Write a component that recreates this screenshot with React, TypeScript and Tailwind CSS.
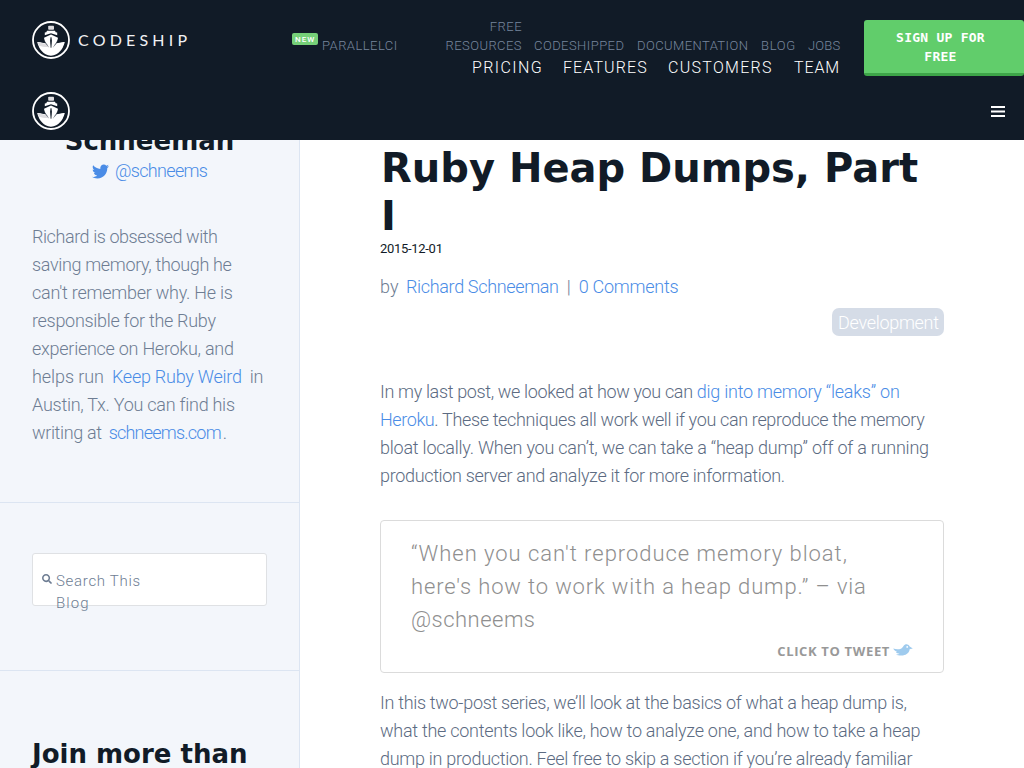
import { FaTwitter, FaSearch } from 'react-icons/fa';

function ShipMark() {
  return (
    <svg viewBox="0 0 38 38" className="block size-[38px] shrink-0" fill="#fff">
      <circle cx="19" cy="19" r="18" fill="none" stroke="#fff" strokeWidth="1.8" />
      <rect x="16.200" y="4.800" width="5.800" height="4" rx="0.8" fill="#dedde0" />
      <path d="M15 9.800h8l.7 1.400 1.500.4v2.600L19 12.300l-6.200 1.900v-2.600l1.500-.4z" />
      <path d="M19 13.400l7 3.300c-.3 2.200-1.100 3.900-2.200 5.600 3 .2 5-1.600 9-1.200-.6 2.400-1.200 3.600-2 5.300-1.400 2.700-3.800 5.200-6.500 6.900-3.500 1.900-7.300 1.900-10.700 0-2.700-1.700-5-4.200-6.400-6.900-.8-1.700-1.500-2.900-2-5.300 4-.4 6 1.400 9 1.200-1.100-1.700-1.900-3.400-2.200-5.600z" />
      <path d="M5.800 21.500c3-.4 4.800 1.200 8 1 .8 1.600 1.800 2.600 2.800 3.400-3.400.2-7-.4-9.300-1.200-.8-1-1.200-2-1.500-3.200z" fill="#dedde0" />
      <path d="M12.300 20.200l1.500 2.900 3.400 3.600-2.200-3.700z M25.700 20.200l-1.500 2.900-3.400 3.600 2.200-3.700z" fill="#5a626d" />
      <path d="M18.500 16.200h1l.4 3.400-.5 7.200h-.8l-.5-7.200z" fill="#111b27" />
    </svg>
  );
}

function TweetBird() {
  return (
    <svg viewBox="0 0 20 12" className="block h-[12px] w-[20px]">
      <path d="M.2 4.600c2.700.9 5.300 1 7.700.2C9 4.200 10 2.900 10.500 1.900 11.400.5 13 .1 14.300.4c1.300.3 2.100 1.100 2.400 2.200l3.100 2-3.200.7c-.2 3.300-2.800 5.600-6.600 6.100-2.600.4-5.400 0-7-.8 1.500.1 2.700-.2 3.600-.8C5 9.500 3.500 8.900 2.900 7.900l1.300-.1C2.400 7.300.8 6.200.2 4.600z" fill="#9fcbee" />
      <circle cx="14.200" cy="2.900" r=".9" fill="#fff" />
    </svg>
  );
}

const link = 'text-[#4a8ce6]';

export default function App() {
  return (
    <div className="flex h-[768px] w-[1024px] flex-col overflow-hidden bg-white font-['Roboto',sans-serif] font-light text-[#5c6b82]">
      <header className="h-[140px] shrink-0 bg-[#111b27]">
        <div className="flex h-[92px]">
          <div className="flex w-[292px] pl-8 pt-[21px]">
            <ShipMark />
            <span className="ml-[8px] mt-[7px] font-['Lato',sans-serif] text-[16px] font-normal leading-6 tracking-[4.200px] text-[#f1f1f3]">CODESHIP</span>
          </div>
          <nav className="w-[572px] pt-[17px]">
            <div className="flex items-end whitespace-nowrap text-[13px] leading-[19px] text-[#77869d]">
              <span className="mb-[10px] h-[12px] w-[26px] rounded-[2px] bg-[#76d078] pl-[3px] text-[8px] font-medium leading-[14px] tracking-[1px] text-white">NEW</span>
              <span className="w-[127px] pl-[4px] tracking-[0.45px]">PARALLELCI</span>
              <span className="w-[77px] text-right tracking-[0.450px]">FREE<br />RESOURCES</span>
              <span className="ml-[12px] w-[103px] tracking-[0.45px]">CODESHIPPED</span>
              <span className="w-[124px] tracking-[0.42px]">DOCUMENTATION</span>
              <span className="w-[47px] tracking-[0.7px]">BLOG</span>
              <span className="tracking-[0.2px]">JOBS</span>
            </div>
            <div className="mt-[2px] flex whitespace-nowrap pl-[180px] text-[16px] leading-[22px] text-white">
              <span className="w-[91px] tracking-[1.400px]">PRICING</span>
              <span className="w-[105px] tracking-[1.100px]">FEATURES</span>
              <span className="w-[126px] tracking-[1.300px]">CUSTOMERS</span>
              <span className="tracking-[0.900px]">TEAM</span>
            </div>
          </nav>
          <button className="mt-[20px] h-[56px] w-[160px] rounded-[3px] border-b-[3px] border-[#3da548] bg-[#61cd6b] pr-[7px] text-center font-['DejaVu_Sans_Mono',monospace] text-[13px] font-bold leading-[19px] tracking-[0.25px] text-white">
            SIGN UP FOR<br />FREE
          </button>
        </div>
        <div className="flex items-start justify-between pl-8 pr-[19px]">
          <ShipMark />
          <svg viewBox="0 0 14 11" className="mt-[14px] h-[11px] w-[14px]" fill="#fff">
            <path d="M0 0h14v2H0zM0 4.500h14v2H0zM0 9h14v2H0z" />
          </svg>
        </div>
      </header>

      <div className="flex h-[628px] overflow-hidden">
        <aside className="w-[300px] shrink-0 border-r border-[#dce5f2] bg-[#f3f6fb]">
          <section className="-mt-[14px] h-[377px] border-b border-[#dce5f2]">
            <h3 className="text-center font-['DejaVu_Sans',sans-serif] text-[26px] font-bold leading-[30px] text-[#111b27]">Schneeman</h3>
            <div className={`flex items-center pl-[92px] pt-px text-[18px] leading-[28px] ${link}`}>
              <FaTwitter className="size-[17px]" />
              <span className="ml-[6px] tracking-[-0.670px]">@schneems</span>
            </div>
            <p className="mt-[38px] whitespace-nowrap pl-8 text-[18px] leading-[28px] text-[#6e7d93]">
              <span className="tracking-[-0.430px]">Richard is obsessed with</span><br />
              <span className="tracking-[-0.340px]">saving memory, though he</span><br />
              <span className="tracking-[-0.240px]">can't remember why. He is</span><br />
              <span className="tracking-[-0.300px]">responsible for the Ruby</span><br />
              <span className="tracking-[-0.260px]">experience on Heroku, and</span><br />
              <span className="tracking-[-0.070px]">helps run</span>
              <a className={`ml-[8px] tracking-[-0.240px] ${link}`}>Keep Ruby Weird</a>
              <span className="ml-[8px] tracking-[-0.200px]">in</span><br />
              <span className="tracking-[-0.260px]">Austin, Tx. You can find his</span><br />
              <span className="tracking-[-0.360px]">writing at</span>
              <a className={`ml-[7px] tracking-[-0.780px] ${link}`}>schneems.com</a>
              <span className="ml-[2px]">.</span>
            </p>
          </section>
          <section className="h-[168px] border-b border-[#dce5f2] pl-8 pt-[50px]">
            <div className="flex h-[53px] w-[235px] rounded-[3px] border border-[#dfe1e4] bg-white pl-[9px] pt-[16px] text-[15px] leading-[22px] text-[#6e7d93]">
              <FaSearch className="mt-[4px] size-[10px]" />
              <span className="ml-[4px] whitespace-nowrap"><span className="tracking-[0.700px]">Search This</span><br /><span className="tracking-[1.100px]">Blog</span></span>
            </div>
          </section>
          <h3 className="mt-[68px] whitespace-nowrap pl-8 font-['DejaVu_Sans',sans-serif] text-[26px] font-bold leading-[30px] text-[#111b27]">Join more than</h3>
        </aside>

        <main className="w-[644px] pl-[80px] pt-[4px]">
          <h1 className="-mr-1 pl-px font-['DejaVu_Sans',sans-serif] text-[40px] font-bold leading-[48px] text-[#111b27]">Ruby Heap Dumps, Part<br />I</h1>
          <div className="text-[13px] font-normal leading-[18px] tracking-[-0.300px] text-[#111b27]">2015-12-01</div>
          <div className="mt-[15px] flex whitespace-nowrap text-[18px] leading-[28px] text-[#6e7d93]">
            <span className="w-[26px]">by</span>
            <a className={`tracking-[-0.340px] ${link}`}>Richard Schneeman</a>
            <span className="ml-[8px]">|</span>
            <a className={`ml-[8px] tracking-[-0.240px] ${link}`}>0 Comments</a>
          </div>
          <div className="mt-[7px] flex justify-end">
            <span className="h-[28px] w-[112px] rounded-[7px] bg-[#d5dce7] pl-[6px] pt-px text-[18px] leading-[28px] tracking-[-0.290px] text-white">Development</span>
          </div>
          <p className="mt-[42px] whitespace-nowrap text-[18px] leading-[28px]">
            <span className="tracking-[-0.350px]">In my last post, we looked at how you can </span>
            <a className={`tracking-[-0.240px] ${link}`}>dig into memory “leaks” on</a><br />
            <a className={`tracking-[-0.400px] ${link}`}>Heroku</a><span className="tracking-[-0.350px]">. These techniques all work well if you can reproduce the memory</span><br />
            <span className="tracking-[-0.230px]">bloat locally. When you can’t, we can take a “heap dump” off of a running</span><br />
            <span className="tracking-[-0.330px]">production server and analyze it for more information.</span>
          </p>
          <blockquote className="mt-[30px] h-[153px] rounded-[4px] border border-[#dbdbdb] pl-[30px] pr-[30px] pt-[16px]">
            <p className="whitespace-nowrap text-[22px] leading-[33px] text-[#8f8f8f]">
              <span className="tracking-[0.970px]">“When you can't reproduce memory bloat,</span><br />
              <span className="tracking-[0.850px]">here's how to work with a heap dump.” – via</span><br />
              <span className="tracking-[0.480px]">@schneems</span>
            </p>
            <div className="mt-[6px] flex justify-end font-['Open_Sans',sans-serif] text-[13px] font-bold leading-[18px] tracking-[0.650px] text-[#999]">
              CLICK TO TWEET<span className="ml-[3px] mt-[2px]"><TweetBird /></span>
            </div>
          </blockquote>
          <p className="mt-[16px] whitespace-nowrap text-[18px] leading-[28px]">
            <span className="tracking-[-0.310px]">In this two-post series, we’ll look at the basics of what a heap dump is,</span><br />
            <span className="tracking-[-0.270px]">what the contents look like, how to analyze one, and how to take a heap</span><br />
            <span className="tracking-[-0.280px]">dump in production. Feel free to skip a section if you’re already familiar</span>
          </p>
        </main>
      </div>
    </div>
  );
}
